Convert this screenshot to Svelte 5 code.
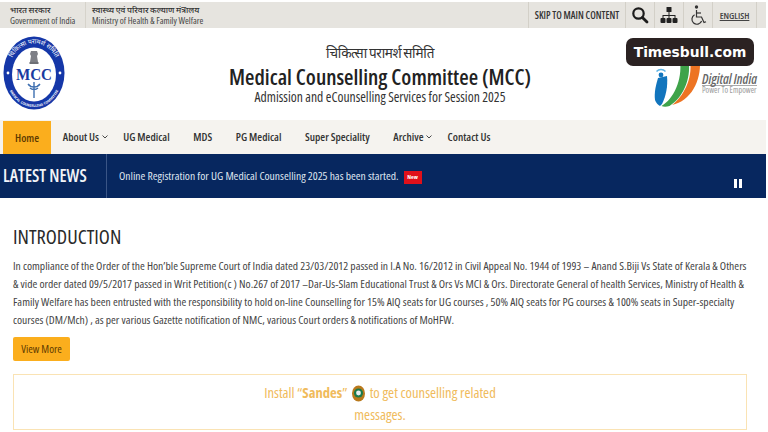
<script>
  const nav = [
    { label: 'Home', active: true },
    { label: 'About Us', caret: true },
    { label: 'UG Medical' },
    { label: 'MDS' },
    { label: 'PG Medical' },
    { label: 'Super Speciality' },
    { label: 'Archive', caret: true },
    { label: 'Contact Us' }
  ];
</script>

<div class="page">
  <div class="topbar">
    <div class="gov first">
      <div class="hi">भारत सरकार</div>
      <div>Government of India</div>
    </div>
    <div class="gov second">
      <div class="hi">स्वास्थ्य एवं परिवार कल्याण मंत्रालय</div>
      <div>Ministry of Health &amp; Family Welfare</div>
    </div>
    <div class="tools">
      <div class="tool skip">SKIP TO MAIN CONTENT</div>
      <div class="tool icon">
        <svg width="18" height="18" viewBox="0 0 18 18"><circle cx="7.5" cy="7.5" r="5.2" fill="none" stroke="#1c1c1c" stroke-width="2.2"/><path d="M11.4 11.4L16 16" stroke="#1c1c1c" stroke-width="2.8" stroke-linecap="round"/></svg>
      </div>
      <div class="tool icon">
        <svg width="18" height="18" viewBox="0 0 18 18" fill="#222"><rect x="6.5" y="1" width="5" height="5" rx=".6"/><rect x="0.5" y="12" width="5" height="5" rx="1"/><rect x="6.5" y="12" width="5" height="5" rx="1"/><rect x="12.5" y="12" width="5" height="5" rx="1"/><path d="M8.5 6h1v3h6v3h-1v-2h-5v2h-1v-2h-5v2h-1V9h6z"/></svg>
      </div>
      <div class="tool icon">
        <svg width="17" height="21" viewBox="0 0 17 21" fill="none" stroke="#333" stroke-width="1.2"><circle cx="6.5" cy="2" r="1.7" fill="#333" stroke="none"/><path d="M6.5 5v7h5l2.5 5.500 2-.8"/><path d="M6.5 8h4.500"/><path d="M4.600 9.800a5 5 0 1 0 7 6.200"/></svg>
      </div>
      <div class="tool lang">ENGLISH</div>
      <div class="tool end"></div>
    </div>
  </div>

  <header class="masthead">
    <svg class="logo" width="62" height="74" viewBox="0 0 62 74">
      <defs>
        <path id="arcTop" d="M5.5 38a25.5 30.5 0 0 1 51 0"/>
        <path id="arcBot" d="M4 42a27 29 0 0 0 54 0"/>
      </defs>
      <ellipse cx="31" cy="37" rx="30.5" ry="36.5" fill="#1537a8"/>
      <ellipse cx="31" cy="38.5" rx="22" ry="27" fill="#fff"/>
      <text class="ring" font-size="6.4"><textPath href="#arcTop" startOffset="50%" text-anchor="middle">चिकित्सा परामर्श समिति</textPath></text>
      <text class="ring" font-size="3.4" font-weight="700"><textPath href="#arcBot" startOffset="50%" text-anchor="middle">MEDICAL COUNSELLING COMMITTEE</textPath></text>
      <path d="M28 15h6l1 3-1 2 1 6h-8l1-6-1-2z" fill="#7d7f86"/>
      <rect x="26.5" y="26" width="9" height="2" fill="#6d6f76"/>
      <text class="mcc" x="31" y="43.5" text-anchor="middle" textLength="36" lengthAdjust="spacingAndGlyphs">MCC</text>
      <path d="M31 46v16M25 48c3 4 9 4 12 0M27 52c2 2 6 2 8 0" fill="none" stroke="#3e6fb0" stroke-width="1.4"/>
      <circle cx="5" cy="37" r="1.4" fill="#fff"/>
      <circle cx="57" cy="37" r="1.4" fill="#fff"/>
    </svg>

    <div class="title">
      <div class="title-hi">चिकित्सा परामर्श समिति</div>
      <h1>Medical Counselling Committee (MCC)</h1>
      <div class="sub">Admission and eCounselling Services for Session 2025</div>
    </div>

    <div class="di">
      <svg width="48" height="50" viewBox="0 0 48 50">
        <path d="M36 4h10c1 20-9 40-28 44 11-8 21-26 18-44z" fill="#ed7423"/>
        <path d="M26 4h8.5c3 18-6 37-19 45-3 1-6 1-8 0 12-7 21-26 18.500-45z" fill="#3fa34a"/>
        <path d="M4 21l9-2c1 10-1 20-5 28l-2 2c-2-1-4-3-5-6-1-8 1-15 3-22z" fill="#1275bd"/>
        <circle cx="7" cy="18" r="2.400" fill="#1275bd"/>
        <path d="M2.500 14.500a6 6 0 0 1 9 0" fill="none" stroke="#5fb4e5" stroke-width="1.400"/>
      </svg>
      <div class="di-text">
        <div class="di-name">Digital India</div>
        <div class="di-tag">Power To Empower</div>
      </div>
    </div>

    <div class="badge">Timesbull.com</div>
  </header>

  <nav>
    {#each nav as item}
      <div class="item" class:active={item.active}>
        {item.label}{#if item.caret}<svg class="caret" width="6" height="4" viewBox="0 0 6 4"><path d="M.5.5L3 3 5.5.5" fill="none" stroke="#333" stroke-width=".9"/></svg>{/if}
      </div>
    {/each}
  </nav>

  <section class="news">
    <div class="news-label">LATEST NEWS</div>
    <div class="news-text">Online Registration for UG Medical Counselling 2025 has been started.<span class="new">New</span></div>
    <div class="pause"><i></i><i></i></div>
  </section>

  <main>
    <h2>INTRODUCTION</h2>
    <p>In compliance of the Order of the Hon’ble Supreme Court of India dated 23/03/2012 passed in I.A No. 16/2012 in Civil Appeal No. 1944 of 1993 – Anand S.Biji Vs State of Kerala &amp; Others<br/>&amp; vide order dated 09/5/2017 passed in Writ Petition(c ) No.267 of 2017 –Dar-Us-Slam Educational Trust &amp; Ors Vs MCI &amp; Ors. Directorate General of health Services, Ministry of Health &amp;<br/>Family Welfare has been entrusted with the responsibility to hold on-line Counselling for 15% AIQ seats for UG courses , 50% AIQ seats for PG courses &amp; 100% seats in Super-specialty<br/>courses (DM/Mch) , as per various Gazette notification of NMC, various Court orders &amp; notifications of MoHFW.</p>
    <div class="more">View More</div>
    <div class="sandes">
      <div class="line">Install “<b>Sandes</b>”
        <svg width="13" height="17" viewBox="0 0 13 17"><ellipse cx="6.5" cy="8.5" rx="6.5" ry="8" fill="#b9791c"/><circle cx="6.5" cy="8" r="4.6" fill="#1c7a4c"/><circle cx="6.5" cy="8" r="2.4" fill="#e8eef0"/></svg>
        to get counselling related</div>
      <div class="line">messages.</div>
    </div>
  </main>
</div>

<style>
  :global(body) { margin: 0; background: #fff; }
  .page {
    width: 766px; height: 432px; overflow: hidden; position: relative;
    font-family: "Open Sans", "Noto Sans", "Noto Sans Devanagari", sans-serif;
    font-stretch: 87%;
    color: #333;
  }
  .topbar {
    height: 26px; margin-top: 2px; background: #e6e4df;
    display: flex; align-items: stretch; font-size: 9.2px; color: #333;
  }
  .gov { line-height: 10.5px; font-weight: 500; color: #444; padding-top: 3px; white-space: nowrap; }
  .gov.first { width: 86px; box-sizing: border-box; padding-left: 10px; border-right: 1px solid #d6d3cb; }
  .gov.second { padding-left: 6px; }
  .hi { font-size: 8.5px; color: #333; }
  .tools { margin-left: auto; display: flex; align-items: stretch; }
  .tool { display: flex; align-items: center; justify-content: center; border-left: 1px solid #d3d0c8; box-sizing: border-box; white-space: nowrap; }
  .skip { width: 97px; font-size: 9.8px; font-weight: 600; color: #333; }
  .icon { width: 29px; }
  .lang { width: 44px; font-size: 9.4px; font-weight: 600; text-decoration: underline; color: #444; }
  .end { width: 10px; }
  .masthead { height: 92px; position: relative; display: flex; align-items: flex-start; }
  .logo { margin: 8px 0 0 3px; flex: none; }
  .title { position: absolute; left: 0; right: 6px; top: 14px; text-align: center; }
  .title-hi { font-size: 13.5px; line-height: 22px; color: #333; letter-spacing: -0.4px; }
  h1 { margin: 0; font-size: 21.6px; line-height: 25px; font-weight: 600; color: #222; }
  .sub { font-size: 13.6px; line-height: 16px; font-weight: 500; color: #333; }
  .di { position: absolute; left: 654px; top: 29px; display: flex; align-items: flex-start; }
  .di-text { margin: 17px 0 0 0; white-space: nowrap; }
  .di-name { font-size: 13.4px; font-style: italic; font-weight: 600; color: #666; border-bottom: 1px solid #aaa; line-height: 11px; }
  .di-tag { font-size: 8.2px; color: #999; line-height: 8px; }
  .badge {
    position: absolute; left: 626px; top: 10px; width: 128px; height: 28px; box-sizing: border-box;
    background: #2b2222; color: #fff; border-radius: 7px; font-family: "DejaVu Sans", sans-serif;
    font-stretch: normal; font-weight: 700; font-size: 13.8px; line-height: 28px; text-align: center;
  }
  nav { height: 34px; background: #f5f3ef; display: flex; padding-left: 3px; font-size: 11.1px; font-weight: 600; color: #333; }
  .item { display: flex; align-items: center; padding: 0 11.8px; white-space: nowrap; line-height: 34px; }
  .item.active { background: #fbae1d; color: #5e3a00; width: 48px; box-sizing: border-box; justify-content: center; padding: 0; margin-top: 1px; height: 33px; }
  .caret { margin: 0 -8px 0 2.500px; }
  .news { height: 44px; background: #07275f; display: flex; align-items: center; position: relative; color: #dfe5f0; white-space: nowrap; }
  .news-label { width: 107px; box-sizing: border-box; height: 44px; line-height: 44px; padding-left: 3px; border-right: 1px solid #3a5586; color: #f2f4f8; font-size: 17.2px; font-weight: 600; }
  .news-text { padding-left: 12px; font-size: 11.6px; font-weight: 500; }
  .new { display: inline-block; margin-left: 5px; background: #e0101a; color: #fff; font-size: 6px; font-weight: 700; width: 18px; height: 13px; line-height: 13px; text-align: center; vertical-align: middle; }
  .pause { position: absolute; left: 734px; top: 25px; display: flex; gap: 2px; }
  .pause i { width: 3px; height: 9px; background: #fff; display: block; }
  main { padding: 0 19px 0 13px; }
  h2 { margin: 27px 0 0; font-size: 20.3px; line-height: 22px; font-weight: 500; color: #2a2a2a; }
  p { margin: 10px 0 0; font-size: 11.6px; line-height: 18px; color: #444; white-space: nowrap; }
  .more { margin-top: 8px; width: 57px; height: 24px; line-height: 24px; text-align: center; background: #fbae1d; color: #5e3a00; font-size: 11px; font-weight: 500; border-radius: 2px; }
  .sandes { margin-top: 13px; width: 734px; height: 56px; box-sizing: border-box; border: 1px solid #fae3b4; text-align: center; color: #f0bb5c; font-size: 14.6px; padding-top: 6px; }
  .line { line-height: 22px; }
  .line svg { vertical-align: -4px; margin: 0 2px; }
  .ring { fill: #fff; font-family: "Noto Sans", sans-serif; }
  .mcc { font-family: "Liberation Serif", serif; font-weight: 700; font-size: 17px; fill: #1a3aa0; }
</style>
